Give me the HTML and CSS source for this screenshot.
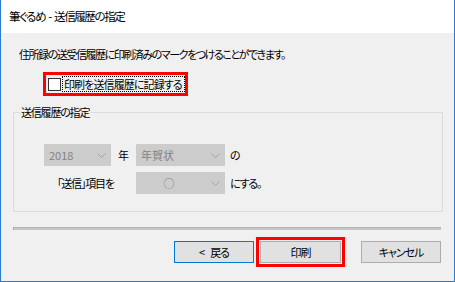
FILE: index.html
```html
<!DOCTYPE html>
<html lang="ja">
<head>
<meta charset="utf-8">
<link rel="stylesheet" href="styles.css">
</head>
<body>
<div class="window">
  <div class="titlebar">筆ぐるめ - 送信履歴の指定</div>
  <div class="content">
    <p class="desc">住所録の送受信履歴に印刷済みのマークをつけることができます。</p>
    <div class="mark">
      <span class="box"></span><span class="focus">印刷を送信履歴に記録する</span>
    </div>
    <fieldset class="group">
      <legend>送信履歴の指定</legend>
      <div class="group-inner">
        <div class="row">
          <div class="combo c-year"><span class="val">2018</span><svg class="chev" width="9" height="5" viewBox="0 0 9 5"><polyline points="0.5,0.5 4.5,4.5 8.5,0.5" fill="none" stroke="#a3a3a3" stroke-width="1"/></svg></div>
          <span class="unit">年</span>
          <div class="combo c-wide"><span class="val">年賀状</span><svg class="chev" width="9" height="5" viewBox="0 0 9 5"><polyline points="0.5,0.5 4.5,4.5 8.5,0.5" fill="none" stroke="#a3a3a3" stroke-width="1"/></svg></div>
          <span class="suffix">の</span>
        </div>
        <div class="row row2">
          <span class="lbl">「送信」項目を</span>
          <div class="combo c-wide"><span class="val center">○</span><svg class="chev" width="9" height="5" viewBox="0 0 9 5"><polyline points="0.5,0.5 4.5,4.5 8.5,0.5" fill="none" stroke="#a3a3a3" stroke-width="1"/></svg></div>
          <span class="suffix">にする。</span>
        </div>
      </div>
    </fieldset>
    <div class="sep"></div>
    <div class="buttons">
      <button class="btn default"><span class="lt">&lt;</span>戻る</button>
      <div class="hl"><button class="btn print">印刷</button></div>
      <button class="btn cancel">キャンセル</button>
    </div>
  </div>
</div>
</body>
</html>
```
FILE: styles.css
```css
html, body {
  margin: 0;
  padding: 0;
}
body {
  background: #f0f0f0;
  font-family: "Noto Sans CJK JP", "Noto Sans", sans-serif;
  font-size: 11px;
  letter-spacing: -1.2px;
  color: #000;
  font-feature-settings: "palt";
}
.window {
  width: 455px;
  height: 282px;
  box-sizing: border-box;
  border: 1px solid #2b7bd3;
  border-top: none;
  display: flex;
  flex-direction: column;
  background: #f0f0f0;
}
.titlebar {
  flex: none;
  height: 33px;
  line-height: 33px;
  background: #fff;
  padding-left: 8px;
  font-size: 11.5px;
  letter-spacing: -1.4px;
  word-spacing: 2px;
  color: #000;
}
.content {
  flex: 1;
  display: flex;
  flex-direction: column;
  align-items: flex-start;
  padding: 0 11px 0 12px;
}
.desc {
  margin: 13px 0 0 6px;
  line-height: 16px;
  letter-spacing: -1.45px;
}
.mark {
  margin: 10px 0 0 30px;
  height: 24px;
  box-sizing: border-box;
  border: 3px solid #ff0000;
  padding: 0 1px 0 2px;
  display: flex;
  align-items: center;
}
.box {
  width: 13px;
  height: 13px;
  box-sizing: border-box;
  background: #fff;
  border: 1px solid #333;
}
.focus {
  margin-left: 2px;
  line-height: 14px;
  padding: 0 2px 0 1px;
  outline: 1px dotted #000;
  outline-offset: 0;
  letter-spacing: -0.9px;
}
.group {
  margin: 8px 0 0 0;
  padding: 0;
  width: 430px;
  box-sizing: border-box;
  border: 1px solid #dcdcdc;
  min-width: 0;
}
.group legend {
  margin-left: 6px;
  padding: 0 1px;
  line-height: 16px;
}
.group-inner {
  padding: 24px 0 17px 30px;
}
.row {
  display: flex;
  align-items: center;
  height: 22px;
}
.row2 {
  margin-top: 6px;
}
.combo {
  height: 22px;
  box-sizing: border-box;
  background: #cccccc;
  border: 1px solid #cccccc;
  color: #838383;
  display: flex;
  align-items: center;
  padding-right: 4px;
}
.combo .val {
  flex: 1;
  padding-left: 4px;
  letter-spacing: 0;
}
.combo .val.center {
  text-align: center;
  padding-left: 0;
  padding-right: 10px;
}
.chev {
  flex: none;
}
.c-year {
  width: 67px;
}
.c-wide {
  width: 89px;
}
.unit {
  width: 25px;
  box-sizing: border-box;
  padding-left: 7px;
}
.suffix {
  margin-left: 5px;
}
.lbl {
  width: 92px;
  box-sizing: border-box;
  padding-left: 13px;
}
.sep {
  margin-top: 15px;
  width: 428px;
  height: 3px;
  box-sizing: border-box;
  background: #c6c6c6;
  border-top: 1px solid #b4b4b4;
  border-left: 1px solid #a8a8a8;
}
.buttons {
  align-self: stretch;
  margin-top: 7px;
  display: flex;
  justify-content: flex-end;
  align-items: center;
  padding-right: 2px;
}
.btn {
  width: 80px;
  height: 22px;
  box-sizing: border-box;
  background: #e1e1e1;
  border: 1px solid #adadad;
  font-family: inherit;
  font-size: 11px;
  letter-spacing: -1px;
  font-feature-settings: "palt";
  color: #000;
  padding: 0;
  margin: 0;
}
.btn .lt {
  margin-right: 6px;
}
.btn.default {
  border-color: #0078d7;
}
.hl {
  margin-left: 2px;
  border: 3px solid #ff0000;
  padding: 1px;
  display: flex;
}
.btn.print {
  width: 81px;
}
.btn.cancel {
  margin-left: 16px;
}
```
